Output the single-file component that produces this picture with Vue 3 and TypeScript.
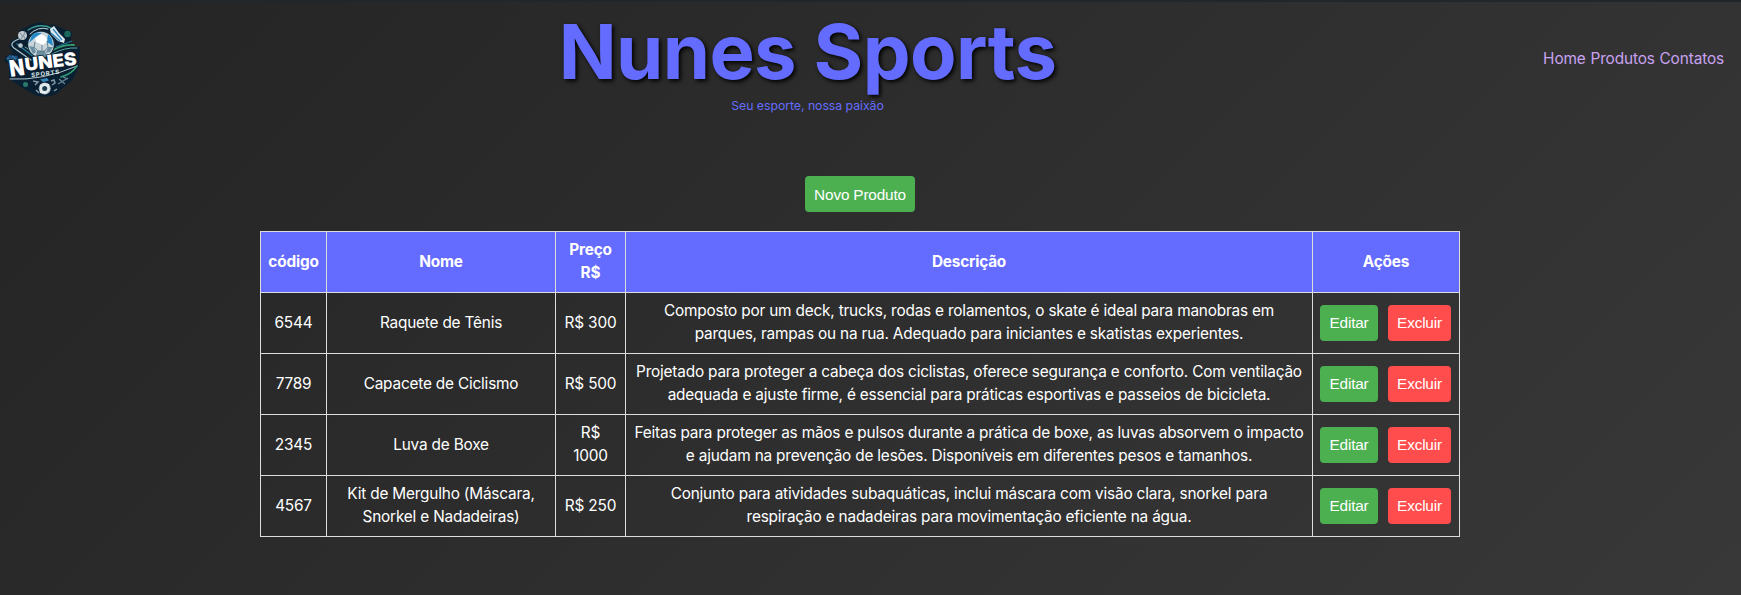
<script setup lang="ts">
interface Product {
  code: string
  name: string
  price: string
  description: string
}

const links: string[] = ['Home', 'Produtos', 'Contatos']

const products: Product[] = [
  {
    code: '6544',
    name: 'Raquete de Tênis',
    price: 'R$ 300',
    description:
      'Composto por um deck, trucks, rodas e rolamentos, o skate é ideal para manobras em parques, rampas ou na rua. Adequado para iniciantes e skatistas experientes.',
  },
  {
    code: '7789',
    name: 'Capacete de Ciclismo',
    price: 'R$ 500',
    description:
      'Projetado para proteger a cabeça dos ciclistas, oferece segurança e conforto. Com ventilação adequada e ajuste firme, é essencial para práticas esportivas e passeios de bicicleta.',
  },
  {
    code: '2345',
    name: 'Luva de Boxe',
    price: 'R$ 1000',
    description:
      'Feitas para proteger as mãos e pulsos durante a prática de boxe, as luvas absorvem o impacto e ajudam na prevenção de lesões. Disponíveis em diferentes pesos e tamanhos.',
  },
  {
    code: '4567',
    name: 'Kit de Mergulho (Máscara, Snorkel e Nadadeiras)',
    price: 'R$ 250',
    description:
      'Conjunto para atividades subaquáticas, inclui máscara com visão clara, snorkel para respiração e nadadeiras para movimentação eficiente na água.',
  },
]
</script>

<template>
  <div class="page">
    <header class="header">
      <svg class="logo" viewBox="0 0 80 80" role="img" aria-label="Nunes Sports">
        <path d="M20 11 L24 9.500 L29 6.500 Q40 1 47 6 L54 5.500 L64 10 L72 13 L70 27 L80 28 L79 48 L72 61.500 L56 75 Q45 80 36 76.500 L24 70 L19 66.500 L9 60 L9 45 L4 42 L6 37 L13 34 L9 27 L11 22 L19 18 Z" fill="#0a2032" />
        <g fill="none" stroke-linecap="round">
          <path d="M28 11 Q41 3 53 10" stroke="#3f9c91" stroke-width="1.4" />
          <path d="M30 15 Q38 7 48 10" stroke="#b9d6dc" />
          <path d="M19 20 Q8 24 14 29 L31 41" stroke="#aac4cc" stroke-width="1.2" />
          <path d="M17 25 L34 38" stroke="#247d96" stroke-width="1.5" />
          <path d="M25 28 L34 34" stroke="#6eb3b6" />
          <path d="M53 31 Q65 25 74 26" stroke="#329b72" stroke-width="1.8" />
          <path d="M52 35 Q65 28 77 29" stroke="#5ba7a2" />
          <path d="M56 28 L72 22" stroke="#247d96" />
          <path d="M10 60 Q42 62 77 47" stroke="#afc8d0" />
          <path d="M61 58 Q72 55 77 47" stroke="#329b72" stroke-width="1.5" />
        </g>
        <circle cx="22.500" cy="16.500" r="4.500" fill="#bfcbd1" />
        <path d="M20 14 Q24 17 21 20 M25 13 Q22 17 25 20" fill="none" stroke="#566f7c" stroke-width=".7" />
        <circle cx="20.500" cy="26.500" r="2.300" fill="#bdc9cd" />
        <circle cx="67.500" cy="15" r="3.200" fill="#1c6a5c" />
        <circle cx="41" cy="25.500" r="13.800" fill="#112b3d" />
        <circle cx="41" cy="25.500" r="12.800" fill="#c8d6dc" />
        <path d="M35 18 L40 15 L45 17 L48 22 L43 26 L36 23 Z" fill="#fff" />
        <path d="M32 16 L36 13.500 L42 14 L36 18 L31 22 L29 24 Z M48 15 L52 20 L53 27 L47 23 Z" fill="#2789c8" />
        <path d="M29 27 L34 28 L36 33 L33 35 Z M53 28 L48 28 L46 34 L50 33 Z M37 32 L45 32 L47 37 Q41 40 36 37 Z" fill="#6a8fa0" />
        <path d="M35 23 L34 28 L38 32 L45 32 L48 28 L47 22 M42 26 L42 31" fill="none" stroke="#526c79" stroke-width=".8" />
        <path d="M50 10 L54 7 L59 14 L65 20 L64 24 L58 22 L51 15 Z" fill="#dceaf0" />
        <path d="M53 10 L62 21 M51 14 L60 22" fill="none" stroke="#2c82bc" stroke-width="1.2" />
        <path d="M6 40 L9 36 L17 37 L19 40 L10 44 Z" fill="#1c527e" />
        <path d="M7 39 L11 41 M12 37 L16 40" stroke="#3977a7" stroke-width="1.2" />
        <text class="logo-initial" transform="translate(10.500 58) rotate(-8)" textLength="15" lengthAdjust="spacingAndGlyphs">N</text>
        <text class="logo-name" transform="translate(25.500 52) rotate(-7)" textLength="52" lengthAdjust="spacingAndGlyphs">UNES</text>
        <text class="logo-sub" transform="translate(31.500 58.300) rotate(-7)" textLength="28" lengthAdjust="spacing">SPORTS</text>
        <circle cx="25.500" cy="65.500" r="2.500" fill="#28796a" />
        <circle cx="44.700" cy="69.500" r="6" fill="#9fb2be" />
        <path d="M40 66 L44 64 L49 65 L50 71 L46 75 L40 74 Z" fill="#e3eaed" />
        <circle cx="44.700" cy="69.500" r="2.500" fill="#1c3c50" />
        <path d="M40 60.500 L47 59 L49 61.500 L43 63 Z" fill="#3188bb" />
        <path d="M33 62 L38 63 L35 66 M36 71 L39 74 M51 62 L54 61 L55 64 L52 66 M54 72 L57 70" fill="none" stroke="#8499a6" stroke-width="1.500" />
        <path d="M58 65 L68 59 M59 60 L65 65 M63 58 L68 60" stroke="#668494" stroke-width="1.300" />
      </svg>
      <div class="brand">
        <h1>Nunes Sports</h1>
        <p>Seu esporte, nossa paixão</p>
      </div>
      <nav class="nav">
        <a v-for="link in links" :key="link">{{ link }}</a>
      </nav>
    </header>

    <main class="content">
      <button class="btn edit create" type="button">Novo Produto</button>
      <table>
        <colgroup>
          <col class="c-code" />
          <col class="c-name" />
          <col class="c-price" />
          <col class="c-desc" />
          <col class="c-actions" />
        </colgroup>
        <thead>
          <tr>
            <th>código</th>
            <th>Nome</th>
            <th>Preço R$</th>
            <th>Descrição</th>
            <th>Ações</th>
          </tr>
        </thead>
        <tbody>
          <tr v-for="p in products" :key="p.code">
            <td>{{ p.code }}</td>
            <td>{{ p.name }}</td>
            <td>{{ p.price }}</td>
            <td>{{ p.description }}</td>
            <td class="actions-cell">
              <div class="actions">
                <button class="btn edit" type="button">Editar</button>
                <button class="btn remove" type="button">Excluir</button>
              </div>
            </td>
          </tr>
        </tbody>
      </table>
    </main>
  </div>
</template>

<style>
body {
  margin: 0;
}
</style>

<style scoped>
.page {
  box-sizing: border-box;
  height: 595px;
  overflow: hidden;
  border-top: 2px solid #21262b;
  background: linear-gradient(135deg, #242424, #383838);
  color: #fff;
  font-family: Inter, "Liberation Sans", sans-serif;
  font-size: 15.36px;
  letter-spacing: -0.19px;
  line-height: 23px;
}
.header {
  box-sizing: border-box;
  display: flex;
  align-items: center;
  justify-content: space-between;
  height: 113px;
  padding: 0 17px 0 0;
}
.logo {
  width: 80px;
  height: 80px;
  letter-spacing: 0;
}
.logo-initial {
  font: 900 23px Inter, sans-serif;
  fill: #fff;
  stroke: #0a2032;
  stroke-width: 1.6px;
  paint-order: stroke;
}
.logo-name {
  font: 900 18px Inter, sans-serif;
  fill: #fff;
  stroke: #0a2032;
  stroke-width: 1.6px;
  paint-order: stroke;
}
.logo-sub {
  font: 700 6px Inter, sans-serif;
  fill: #dce7eb;
}
.brand {
  padding: 4px 8px 0 0;
  text-align: center;
}
h1 {
  margin: 0;
  color: #646cff;
  font-size: 76px;
  font-weight: 700;
  letter-spacing: -0.6px;
  line-height: 88px;
  text-shadow: 2px 2px 4px #000;
}
.brand p {
  margin: 1px 0 0;
  color: #646cff;
  font-size: 12.3px;
  letter-spacing: -0.05px;
  line-height: 19px;
}
.nav {
  display: flex;
  gap: 4.8px;
  color: #c8a2f0;
  letter-spacing: -0.12px;
}
.content {
  display: flex;
  flex-direction: column;
  align-items: center;
  width: 1200px;
  margin: 61px 0 0 260px;
}
.btn {
  width: 58px;
  height: 36px;
  padding: 0;
  border: 0;
  border-radius: 4px;
  color: #fff;
  font: 15.36px "Liberation Sans", Arial, sans-serif;
  letter-spacing: -0.18px;
  white-space: nowrap;
}
.create {
  width: 110px;
  padding-top: 1px;
}
.edit {
  background: #4caf50;
}
.remove {
  width: 63px;
  background: #ff4d4d;
}
table {
  width: 1200px;
  margin-top: 19px;
  table-layout: fixed;
  border-collapse: collapse;
  text-align: center;
}
.c-code { width: 66px; }
.c-name { width: 229px; }
.c-price { width: 70px; }
.c-desc { width: 687px; }
.c-actions { width: 147px; }
th,
td {
  box-sizing: border-box;
  height: 61px;
  padding: 6px 7px 8px;
  border: 1px solid #ddd;
}
th {
  background: #646cff;
  font-weight: 700;
}
.actions-cell {
  padding: 7px;
}
.actions {
  display: flex;
  gap: 10px;
}
</style>
